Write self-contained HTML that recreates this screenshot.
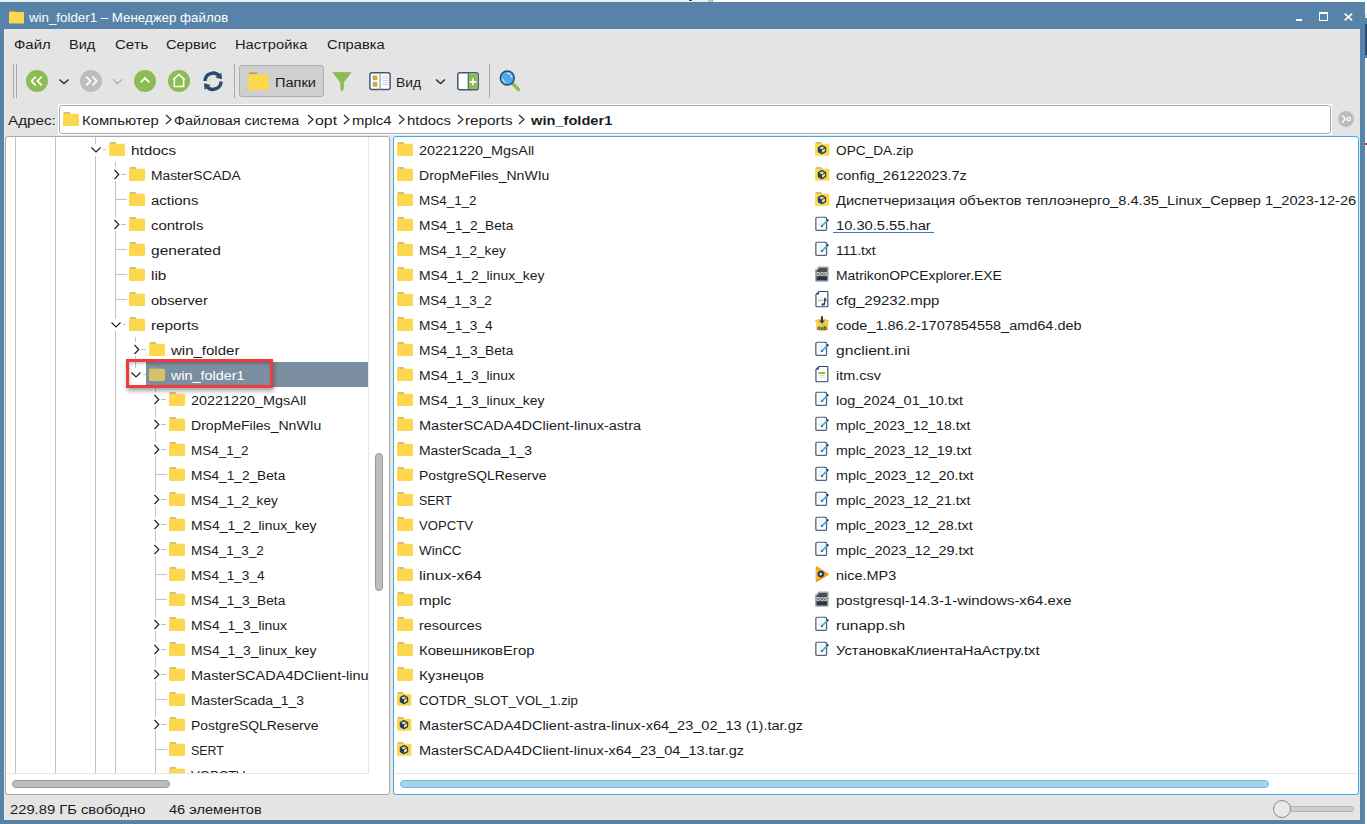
<!DOCTYPE html>
<html><head><meta charset="utf-8">
<style>
*{margin:0;padding:0;box-sizing:border-box}
html,body{width:1367px;height:824px;overflow:hidden;background:#fff}
body{position:relative;font-family:"Liberation Sans",sans-serif;font-size:14.4px;color:#1b1b1b}
.a{position:absolute}
.t{position:absolute;white-space:nowrap;line-height:25px;height:25px;font-size:12.5px;transform:scaleX(1.152);transform-origin:0 0}
.r{padding-top:2px}
.ic{position:absolute;overflow:visible}
</style></head><body>


<svg width="0" height="0" style="position:absolute">
<defs>
<symbol id="fold" viewBox="0 0 16 14">
  <path d="M0.5 1.2 Q0.5 0.2 1.5 0.2 H6 Q6.8 0.2 7.3 1.2 L7.6 1.8 H0.5 Z" fill="#c8a53c"/>
  <rect x="0" y="1.7" width="16" height="12.3" rx="1" fill="#fdd84e"/>
</symbol>
<symbol id="arch" viewBox="0 0 16 14" style="overflow:visible">
  <path d="M0.5 1.2 Q0.5 0.2 1.5 0.2 H5.6 Q6.4 0.2 6.9 1.2 L7.2 1.8 H0.5 Z" fill="#c8a53c"/>
  <rect x="0" y="1.7" width="14.4" height="12" rx="1" fill="#fdd84e"/>
  <path d="M7 3.6 L10.6 5.6 V9.6 L7 11.6 L3.4 9.6 V5.6 Z" fill="#fde35a" stroke="#1e3f6e" stroke-width="1.25" stroke-linejoin="round"/>
  <path d="M3.4 5.6 L7 7.6 V11.6 L3.4 9.6 Z" fill="#1e3f6e"/>
  <path d="M7 7.6 L10.6 5.6" stroke="#1e3f6e" stroke-width="1"/>
</symbol>
<symbol id="txt" viewBox="0 0 18 18" style="overflow:visible">
  <rect x="2.85" y="1.35" width="10.7" height="13.1" rx="1.2" fill="#fff" stroke="#4a6484" stroke-width="1.3"/>
  <path d="M4.5 1.3h1M7 1.3h1M9.5 1.3h1" stroke="#d0d8e0" stroke-width="0.8"/>
  <path d="M5.5 4h5M5.5 6h5M5.5 8h4M5.5 10h2.5" stroke="#e2e2e2" stroke-width="0.9"/>
  <path d="M8.6 10.4 L15.2 3.6" stroke="#3daee9" stroke-width="1.7"/>
  <path d="M8.4 10.6 L9.2 9.8" stroke="#222" stroke-width="1.6"/>
  <path d="M14 4.8 L15.3 3.5" stroke="#2a2a2a" stroke-width="1.7"/>
</symbol>
<symbol id="exe" viewBox="0 0 18 18" style="overflow:visible">
  <path d="M5.2 0.4 H14.6 Q15.6 0.4 15.6 1.4 V14.8 Q15.6 15.8 14.6 15.8 H3.1 Q2.1 15.8 2.1 14.8 V3.6 Z" fill="#a5a5a5"/>
  <path d="M5.6 1.9 H14.1 V14.2 H3.7 V4.1 Z" fill="#4b4d52"/>
  <path d="M2.1 3.6 L5.2 0.4 V3.6 Z" fill="#e8e8e8"/>
  <rect x="3.7" y="10.8" width="10.4" height="3.4" fill="#24354d"/>
  <text x="8.9" y="10.2" font-family="Liberation Sans" font-size="4.8" font-weight="700" fill="#eeeeee" text-anchor="middle">DOS</text>
</symbol>
<symbol id="doc" viewBox="0 0 18 18" style="overflow:visible">
  <path d="M6 0.55 H14.3 Q14.85 0.55 14.85 1.1 V15.2 Q14.85 15.75 14.3 15.75 H3.5 Q2.95 15.75 2.95 15.2 V3.6 Z" fill="#fff" stroke="#2f4a6b" stroke-width="1.1"/>
  <path d="M2.95 3.6 L6 0.55 V3.6 Z" fill="#2f4a6b"/>
  <path d="M5.3 9.6h1.2M7.3 9.6h1.2M9.3 9.6h1.2" stroke="#7cc142" stroke-width="1.3"/>
  <path d="M5.9 6.5v2.3M7.9 5v3.8M9.9 6.5v2.3" stroke="#d8d8d8" stroke-width="0.8"/>
  <path d="M11.6 7 V13.4 M11.6 7 Q13.3 8.2 13.1 10.2" stroke="#2f4a6b" stroke-width="1.2" fill="none"/>
  <ellipse cx="10.2" cy="13.4" rx="1.7" ry="1.2" fill="#2f4a6b"/>
</symbol>
<symbol id="csv" viewBox="0 0 18 18" style="overflow:visible">
  <path d="M6 0.55 H14.3 Q14.85 0.55 14.85 1.1 V15.2 Q14.85 15.75 14.3 15.75 H3.5 Q2.95 15.75 2.95 15.2 V3.6 Z" fill="#fff" stroke="#2f4a6b" stroke-width="1.1"/>
  <path d="M2.95 3.6 L6 0.55 V3.6 Z" fill="#2f4a6b"/>
  <rect x="5.6" y="5.9" width="6.6" height="2" fill="#7cc142"/>
  <path d="M5.6 9.5h6.6M5.6 11.3h6.6" stroke="#dcdcdc" stroke-width="1.1"/>
</symbol>
<symbol id="deb" viewBox="0 0 18 18" style="overflow:visible">
  <path d="M1.8 4.3 L9 2.2 L16.2 4.3 L15 6.6 L9 8.3 L3 6.6 Z" fill="#f4c63a"/>
  <path d="M3 6.6 L9 8.3 V15.6 L3.3 13.8 Z" fill="#f7d24c"/>
  <path d="M9 8.3 L15 6.6 L14.7 13.8 L9 15.6 Z" fill="#ecc030"/>
  <path d="M9 0.2 V5" stroke="#1f3d66" stroke-width="2"/>
  <path d="M6.2 4.5 L9 7.8 L11.8 4.5 Z" fill="#1f3d66"/>
  <text x="9" y="14" font-family="Liberation Sans" font-size="5.6" font-weight="700" fill="#1f3d66" text-anchor="middle">deb</text>
</symbol>
<symbol id="mp3" viewBox="0 0 18 18" style="overflow:visible">
  <path d="M3.4 0.9 L15.3 8.3 L3.4 15.5 Z" fill="#ff9b14" stroke="#ff9b14" stroke-width="1.4" stroke-linejoin="round"/>
  <path d="M3.6 3.2 L11 8.2 L3.6 13.2 Z" fill="#ffd43b"/>
  <circle cx="7.8" cy="8.1" r="3.4" fill="#1f3d66"/>
  <path d="M6.9 6.5 L9.6 8.1 L6.9 9.7 Z" fill="#fff"/>
</symbol>
</defs>
</svg>

<div class="a" style="left:0;top:0;width:708px;height:2px;background:#eeeff1"></div>
<div class="a" style="left:689px;top:0;width:3px;height:1px;background:#444"></div>
<div class="a" style="left:708px;top:0;width:4px;height:2px;background:#c8c4c0"></div>
<div class="a" style="left:712px;top:0;width:1px;height:2px;background:#8aa6c0"></div>
<div class="a" style="left:1365px;top:13px;width:2px;height:5px;background:#e6e6e6"></div>
<div class="a" style="left:1365px;top:18px;width:2px;height:6px;background:#5683a7"></div>
<div class="a" style="left:1365px;top:24px;width:2px;height:31px;background:#2f4a6b"></div>
<div class="a" style="left:1365px;top:55px;width:2px;height:3px;background:#5683a7"></div>
<div class="a" style="left:1365px;top:143px;width:2px;height:2px;background:#d9342b"></div>
<div class="a" style="left:0;top:2px;width:1365px;height:822px;background:#5683a7"></div>
<div class="a" style="left:4px;top:29px;width:1356px;height:791px;background:#e4e4e4"></div>
<div class="a" style="left:4px;top:29px;width:1px;height:791px;background:#ece8e6"></div>
<svg class="ic" style="left:9px;top:10px" width="15" height="14"><use href="#fold"/></svg>
<div class="t" style="left:29px;top:4.5px;color:#fff;font-size:13.2px;transform:scaleX(1.009)">win_folder1 – Менеджер файлов</div>
<div class="a" style="left:1296px;top:19px;width:6px;height:2px;background:#fff"></div>
<div class="a" style="left:1319px;top:12px;width:9px;height:9px;border:1.2px solid #fff;border-top-width:2px"></div>
<svg class="ic" style="left:1343.5px;top:12.6px" width="9" height="8"><path d="M0.7 0.6 L8.1 7.4 M8.1 0.6 L0.7 7.4" stroke="#fff" stroke-width="1.6"/></svg>
<div class="t" style="left:14px;top:33px;transform:scaleX(1.1967);">Файл</div>
<div class="t" style="left:69px;top:33px;transform:scaleX(1.1610);">Вид</div>
<div class="t" style="left:115px;top:33px;transform:scaleX(1.2011);">Сеть</div>
<div class="t" style="left:166px;top:33px;transform:scaleX(1.1757);">Сервис</div>
<div class="t" style="left:235px;top:33px;transform:scaleX(1.1749);">Настройка</div>
<div class="t" style="left:327px;top:33px;transform:scaleX(1.1790);">Справка</div>
<div class="a" style="left:13px;top:64px;width:1px;height:34px;background:#a8a8a8"></div>
<div class="a" style="left:16px;top:64px;width:1px;height:34px;background:#a8a8a8"></div>
<svg class="ic" style="left:0;top:55px" width="540" height="50">
<circle cx="37" cy="26" r="11" fill="#8bbd52"/>
<path d="M35.7 21.6 L31.5 26 L35.7 30.4 M41.8 21.6 L37.6 26 L41.8 30.4" stroke="#fff" stroke-width="1.8" fill="none"/>
<path d="M59.4 24.4 L64 28.6 L68.5 24.4" stroke="#2a2a2a" stroke-width="1.3" fill="none"/>
<circle cx="91" cy="26" r="11" fill="#bdbdbd"/>
<path d="M86.3 21.6 L90.5 26 L86.3 30.4 M92.4 21.6 L96.6 26 L92.4 30.4" stroke="#fff" stroke-width="1.8" fill="none"/>
<path d="M113 24.4 L117.5 28.6 L122 24.4" stroke="#a8a8a8" stroke-width="1.2" fill="none"/>
<circle cx="145" cy="26" r="11" fill="#8bbd52"/>
<path d="M140.6 27.4 L145 23 L149.4 27.4" stroke="#fff" stroke-width="1.8" fill="none"/>
<circle cx="179" cy="26" r="11" fill="#8bbd52"/>
<path d="M173.2 24.6 L179 19.5 L184.8 24.6 M174.3 24 V31.5 H183.6 V24" stroke="#fff" stroke-width="1.6" fill="none"/>
<path d="M205 26 A8 8 0 0 1 219.5 21.5" stroke="#2d4a6c" stroke-width="3.4" fill="none"/>
<path d="M221.3 17.5 L222 24.3 L215.5 22.5 Z" fill="#2d4a6c"/>
<path d="M221 26.5 A8 8 0 0 1 206.5 31" stroke="#2d4a6c" stroke-width="3.4" fill="none"/>
<path d="M204.6 35 L204 28.2 L210.5 30 Z" fill="#2d4a6c"/>
<rect x="234" y="9" width="1" height="34" fill="#aaa"/>
<path d="M333 17.5 H351 L343.4 27.5 V34 Q343 35.5 341 35.8 L340.6 27.5 Z" fill="#8bbd52" stroke="#8bbd52" stroke-width="0.8" stroke-linejoin="round"/>
<rect x="369.9" y="17.8" width="20.2" height="16.8" rx="2" fill="#fff" stroke="#3d5a7a" stroke-width="1.5"/>
<rect x="379.5" y="18" width="1.2" height="16.5" fill="#8d9fb3"/>
<rect x="372.7" y="20.5" width="4.6" height="4.7" rx="0.8" fill="#c9a83e"/>
<rect x="372.7" y="27" width="4.6" height="4.7" rx="0.8" fill="#c9a83e"/>
<path d="M382.5 21.5h6M382.5 23.5h6M382.5 25.5h6M382.5 27.5h6M382.5 29.5h6" stroke="#cfcfcf" stroke-width="0.9"/>
<path d="M436 24.4 L440.5 28.6 L445 24.4" stroke="#2a2a2a" stroke-width="1.3" fill="none"/>
<rect x="457.8" y="17.8" width="20.4" height="16.9" rx="2" fill="#fff" stroke="#3d5a7a" stroke-width="1.5"/>
<rect x="468.3" y="18.6" width="9.2" height="15.3" fill="#8bbd52"/>
<rect x="467.7" y="18" width="1.1" height="16.5" fill="#3d5a7a"/>
<path d="M473 23.3 V30.3 M469.5 26.8 H476.5" stroke="#fff" stroke-width="1.7"/>
<rect x="489" y="9" width="1" height="34" fill="#aaa"/>
<path d="M512 28 L519.5 35.5" stroke="#8bbd52" stroke-width="3.3"/>
<circle cx="507.3" cy="23" r="7" fill="#49adec" stroke="#2d4a6c" stroke-width="1.4"/>
<path d="M507 18.3 A4.7 4.7 0 0 1 511.8 22.6 M502.6 23.5 A4.7 4.7 0 0 0 505.5 27.5" stroke="#fff" stroke-width="1" fill="none"/>
</svg>
<div class="a" style="left:239px;top:65px;width:85px;height:32px;background:#cfcfcf;border:1px solid #aeaeae;border-radius:3px"></div>
<svg class="ic" style="left:248px;top:72px" width="21" height="18"><use href="#fold"/></svg>
<div class="t" style="left:274.5px;top:71px;transform:scaleX(1.1664);">Папки</div>
<div class="t" style="left:395.5px;top:71px;transform:scaleX(1.1076);">Вид</div>
<div class="t" style="left:8px;top:109px;transform:scaleX(1.2156);">Адрес:</div>
<div class="a" style="left:58px;top:104px;width:1274px;height:31px;background:#fff"></div>
<div class="a" style="left:59px;top:105px;width:1272px;height:29px;border:1px solid #acacac;border-radius:3px"></div>
<svg class="ic" style="left:63px;top:112px" width="16" height="14"><use href="#fold"/></svg>
<div class="t" style="left:81.5px;top:109px;transform:scaleX(1.1878);">Компьютер</div>
<div class="t" style="left:173.5px;top:109px;transform:scaleX(1.1474);">Файловая система</div>
<div class="t" style="left:315px;top:109px;transform:scaleX(1.2702);">opt</div>
<div class="t" style="left:351.5px;top:109px;transform:scaleX(1.1823);">mplc4</div>
<div class="t" style="left:406.5px;top:109px;transform:scaleX(1.1904);">htdocs</div>
<div class="t" style="left:465px;top:109px;transform:scaleX(1.2235);">reports</div>
<svg class="ic" style="left:164.5px;top:114px" width="8" height="12"><path d="M1 1 L6 5.5 L1 10" stroke="#222" stroke-width="1.1" fill="none"/></svg>
<svg class="ic" style="left:306.5px;top:114px" width="8" height="12"><path d="M1 1 L6 5.5 L1 10" stroke="#222" stroke-width="1.1" fill="none"/></svg>
<svg class="ic" style="left:343px;top:114px" width="8" height="12"><path d="M1 1 L6 5.5 L1 10" stroke="#222" stroke-width="1.1" fill="none"/></svg>
<svg class="ic" style="left:397.5px;top:114px" width="8" height="12"><path d="M1 1 L6 5.5 L1 10" stroke="#222" stroke-width="1.1" fill="none"/></svg>
<svg class="ic" style="left:457px;top:114px" width="8" height="12"><path d="M1 1 L6 5.5 L1 10" stroke="#222" stroke-width="1.1" fill="none"/></svg>
<svg class="ic" style="left:518px;top:114px" width="8" height="12"><path d="M1 1 L6 5.5 L1 10" stroke="#222" stroke-width="1.1" fill="none"/></svg>
<div class="t" style="left:530.5px;top:109px;transform:scaleX(1.1707);font-weight:700;">win_folder1</div>
<svg class="ic" style="left:1338px;top:111px" width="16" height="16"><circle cx="8" cy="8" r="8" fill="#bcbcbc"/><path d="M4 4.5 L7.5 8 L4 11.5" stroke="#fff" stroke-width="1.4" fill="none"/><circle cx="10.8" cy="8" r="1.6" stroke="#fff" stroke-width="1.2" fill="none"/></svg>
<div class="a" style="left:5px;top:136px;width:385px;height:659px;background:#fff;border:1px solid #a9a9a9;border-radius:3px"></div>
<div class="a" style="left:6px;top:137px;width:362px;height:636px;overflow:hidden">
<div class="a" style="left:9px;top:0px;width:1px;height:636px;background:#c2c2c2"></div>
<div class="a" style="left:49px;top:0px;width:1px;height:636px;background:#c2c2c2"></div>
<div class="a" style="left:140px;top:225px;width:222px;height:25px;background:#7b8fa1"></div>
<div class="a" style="left:89px;top:0px;width:1px;height:636px;background:#c2c2c2"></div>
<div class="a" style="left:109px;top:25px;width:1px;height:611px;background:#c2c2c2"></div>
<div class="a" style="left:129px;top:200px;width:1px;height:31px;background:#c2c2c2"></div>
<div class="a" style="left:149px;top:251px;width:1px;height:385px;background:#c2c2c2"></div>
<div class="a" style="left:95px;top:12px;width:5px;height:1px;background:#c2c2c2"></div>
<div class="a" style="left:84px;top:7px;width:13px;height:12px;background:#fff"></div>
<svg class="ic" style="left:85px;top:10px" width="12" height="8"><path d="M0.5 0.5 L5 5 L9.5 0.5" stroke="#1e1e1e" stroke-width="1.15" fill="none"/></svg>
<svg class="ic" style="left:103px;top:5px;" width="16" height="14"><use href="#fold"/></svg>
<div class="t r" style="left:125px;top:0px;transform:scaleX(1.2242)">htdocs</div>
<div class="a" style="left:115px;top:37px;width:5px;height:1px;background:#c2c2c2"></div>
<div class="a" style="left:106px;top:30px;width:9px;height:14px;background:#fff"></div>
<svg class="ic" style="left:108px;top:32px" width="8" height="12"><path d="M0.5 1 L4.8 5.5 L0.5 10" stroke="#1e1e1e" stroke-width="1.15" fill="none"/></svg>
<svg class="ic" style="left:123px;top:30px;" width="16" height="14"><use href="#fold"/></svg>
<div class="t r" style="left:145px;top:25px;transform:scaleX(1.1047)">MasterSCADA</div>
<div class="a" style="left:109px;top:62px;width:12px;height:1px;background:#c2c2c2"></div>
<svg class="ic" style="left:123px;top:55px;" width="16" height="14"><use href="#fold"/></svg>
<div class="t r" style="left:145px;top:50px;transform:scaleX(1.1960)">actions</div>
<div class="a" style="left:115px;top:87px;width:5px;height:1px;background:#c2c2c2"></div>
<div class="a" style="left:106px;top:80px;width:9px;height:14px;background:#fff"></div>
<svg class="ic" style="left:108px;top:82px" width="8" height="12"><path d="M0.5 1 L4.8 5.5 L0.5 10" stroke="#1e1e1e" stroke-width="1.15" fill="none"/></svg>
<svg class="ic" style="left:123px;top:80px;" width="16" height="14"><use href="#fold"/></svg>
<div class="t r" style="left:145px;top:75px;transform:scaleX(1.1962)">controls</div>
<div class="a" style="left:109px;top:112px;width:12px;height:1px;background:#c2c2c2"></div>
<svg class="ic" style="left:123px;top:105px;" width="16" height="14"><use href="#fold"/></svg>
<div class="t r" style="left:145px;top:100px;transform:scaleX(1.2409)">generated</div>
<div class="a" style="left:109px;top:137px;width:12px;height:1px;background:#c2c2c2"></div>
<svg class="ic" style="left:123px;top:130px;" width="16" height="14"><use href="#fold"/></svg>
<div class="t r" style="left:145px;top:125px;transform:scaleX(1.2288)">lib</div>
<div class="a" style="left:109px;top:162px;width:12px;height:1px;background:#c2c2c2"></div>
<svg class="ic" style="left:123px;top:155px;" width="16" height="14"><use href="#fold"/></svg>
<div class="t r" style="left:145px;top:150px;transform:scaleX(1.1686)">observer</div>
<div class="a" style="left:115px;top:187px;width:5px;height:1px;background:#c2c2c2"></div>
<div class="a" style="left:104px;top:182px;width:13px;height:12px;background:#fff"></div>
<svg class="ic" style="left:105px;top:185px" width="12" height="8"><path d="M0.5 0.5 L5 5 L9.5 0.5" stroke="#1e1e1e" stroke-width="1.15" fill="none"/></svg>
<svg class="ic" style="left:123px;top:180px;" width="16" height="14"><use href="#fold"/></svg>
<div class="t r" style="left:145px;top:175px;transform:scaleX(1.2235)">reports</div>
<div class="a" style="left:135px;top:212px;width:5px;height:1px;background:#c2c2c2"></div>
<div class="a" style="left:126px;top:205px;width:9px;height:14px;background:#fff"></div>
<svg class="ic" style="left:128px;top:207px" width="8" height="12"><path d="M0.5 1 L4.8 5.5 L0.5 10" stroke="#1e1e1e" stroke-width="1.15" fill="none"/></svg>
<svg class="ic" style="left:143px;top:205px;" width="16" height="14"><use href="#fold"/></svg>
<div class="t r" style="left:165px;top:200px;transform:scaleX(1.2003)">win_folder</div>
<div class="a" style="left:135px;top:237px;width:5px;height:1px;background:#c2c2c2"></div>
<div class="a" style="left:124px;top:232px;width:13px;height:12px;background:#fff"></div>
<svg class="ic" style="left:125px;top:235px" width="12" height="8"><path d="M0.5 0.5 L5 5 L9.5 0.5" stroke="#1e1e1e" stroke-width="1.15" fill="none"/></svg>
<svg class="ic" style="left:143px;top:230px;opacity:0.7" width="16" height="14"><use href="#fold"/></svg>
<div class="t r" style="left:165px;top:225px;color:#fff;transform:scaleX(1.1504)">win_folder1</div>
<div class="a" style="left:155px;top:262px;width:5px;height:1px;background:#c2c2c2"></div>
<div class="a" style="left:146px;top:255px;width:9px;height:14px;background:#fff"></div>
<svg class="ic" style="left:148px;top:257px" width="8" height="12"><path d="M0.5 1 L4.8 5.5 L0.5 10" stroke="#1e1e1e" stroke-width="1.15" fill="none"/></svg>
<svg class="ic" style="left:163px;top:255px;" width="16" height="14"><use href="#fold"/></svg>
<div class="t r" style="left:185px;top:250px;transform:scaleX(1.1520)">20221220_MgsAll</div>
<div class="a" style="left:155px;top:287px;width:5px;height:1px;background:#c2c2c2"></div>
<div class="a" style="left:146px;top:280px;width:9px;height:14px;background:#fff"></div>
<svg class="ic" style="left:148px;top:282px" width="8" height="12"><path d="M0.5 1 L4.8 5.5 L0.5 10" stroke="#1e1e1e" stroke-width="1.15" fill="none"/></svg>
<svg class="ic" style="left:163px;top:280px;" width="16" height="14"><use href="#fold"/></svg>
<div class="t r" style="left:185px;top:275px;transform:scaleX(1.1241)">DropMeFiles_NnWIu</div>
<div class="a" style="left:155px;top:312px;width:5px;height:1px;background:#c2c2c2"></div>
<div class="a" style="left:146px;top:305px;width:9px;height:14px;background:#fff"></div>
<svg class="ic" style="left:148px;top:307px" width="8" height="12"><path d="M0.5 1 L4.8 5.5 L0.5 10" stroke="#1e1e1e" stroke-width="1.15" fill="none"/></svg>
<svg class="ic" style="left:163px;top:305px;" width="16" height="14"><use href="#fold"/></svg>
<div class="t r" style="left:185px;top:300px;transform:scaleX(1.0759)">MS4_1_2</div>
<div class="a" style="left:149px;top:337px;width:12px;height:1px;background:#c2c2c2"></div>
<svg class="ic" style="left:163px;top:330px;" width="16" height="14"><use href="#fold"/></svg>
<div class="t r" style="left:185px;top:325px;transform:scaleX(1.0935)">MS4_1_2_Beta</div>
<div class="a" style="left:155px;top:362px;width:5px;height:1px;background:#c2c2c2"></div>
<div class="a" style="left:146px;top:355px;width:9px;height:14px;background:#fff"></div>
<svg class="ic" style="left:148px;top:357px" width="8" height="12"><path d="M0.5 1 L4.8 5.5 L0.5 10" stroke="#1e1e1e" stroke-width="1.15" fill="none"/></svg>
<svg class="ic" style="left:163px;top:355px;" width="16" height="14"><use href="#fold"/></svg>
<div class="t r" style="left:185px;top:350px;transform:scaleX(1.0853)">MS4_1_2_key</div>
<div class="a" style="left:155px;top:387px;width:5px;height:1px;background:#c2c2c2"></div>
<div class="a" style="left:146px;top:380px;width:9px;height:14px;background:#fff"></div>
<svg class="ic" style="left:148px;top:382px" width="8" height="12"><path d="M0.5 1 L4.8 5.5 L0.5 10" stroke="#1e1e1e" stroke-width="1.15" fill="none"/></svg>
<svg class="ic" style="left:163px;top:380px;" width="16" height="14"><use href="#fold"/></svg>
<div class="t r" style="left:185px;top:375px;transform:scaleX(1.1153)">MS4_1_2_linux_key</div>
<div class="a" style="left:155px;top:412px;width:5px;height:1px;background:#c2c2c2"></div>
<div class="a" style="left:146px;top:405px;width:9px;height:14px;background:#fff"></div>
<svg class="ic" style="left:148px;top:407px" width="8" height="12"><path d="M0.5 1 L4.8 5.5 L0.5 10" stroke="#1e1e1e" stroke-width="1.15" fill="none"/></svg>
<svg class="ic" style="left:163px;top:405px;" width="16" height="14"><use href="#fold"/></svg>
<div class="t r" style="left:185px;top:400px;transform:scaleX(1.0782)">MS4_1_3_2</div>
<div class="a" style="left:149px;top:437px;width:12px;height:1px;background:#c2c2c2"></div>
<svg class="ic" style="left:163px;top:430px;" width="16" height="14"><use href="#fold"/></svg>
<div class="t r" style="left:185px;top:425px;transform:scaleX(1.0918)">MS4_1_3_4</div>
<div class="a" style="left:149px;top:462px;width:12px;height:1px;background:#c2c2c2"></div>
<svg class="ic" style="left:163px;top:455px;" width="16" height="14"><use href="#fold"/></svg>
<div class="t r" style="left:185px;top:450px;transform:scaleX(1.0935)">MS4_1_3_Beta</div>
<div class="a" style="left:155px;top:487px;width:5px;height:1px;background:#c2c2c2"></div>
<div class="a" style="left:146px;top:480px;width:9px;height:14px;background:#fff"></div>
<svg class="ic" style="left:148px;top:482px" width="8" height="12"><path d="M0.5 1 L4.8 5.5 L0.5 10" stroke="#1e1e1e" stroke-width="1.15" fill="none"/></svg>
<svg class="ic" style="left:163px;top:480px;" width="16" height="14"><use href="#fold"/></svg>
<div class="t r" style="left:185px;top:475px;transform:scaleX(1.1146)">MS4_1_3_linux</div>
<div class="a" style="left:155px;top:512px;width:5px;height:1px;background:#c2c2c2"></div>
<div class="a" style="left:146px;top:505px;width:9px;height:14px;background:#fff"></div>
<svg class="ic" style="left:148px;top:507px" width="8" height="12"><path d="M0.5 1 L4.8 5.5 L0.5 10" stroke="#1e1e1e" stroke-width="1.15" fill="none"/></svg>
<svg class="ic" style="left:163px;top:505px;" width="16" height="14"><use href="#fold"/></svg>
<div class="t r" style="left:185px;top:500px;transform:scaleX(1.1153)">MS4_1_3_linux_key</div>
<div class="a" style="left:155px;top:537px;width:5px;height:1px;background:#c2c2c2"></div>
<div class="a" style="left:146px;top:530px;width:9px;height:14px;background:#fff"></div>
<svg class="ic" style="left:148px;top:532px" width="8" height="12"><path d="M0.5 1 L4.8 5.5 L0.5 10" stroke="#1e1e1e" stroke-width="1.15" fill="none"/></svg>
<svg class="ic" style="left:163px;top:530px;" width="16" height="14"><use href="#fold"/></svg>
<div class="t r" style="left:185px;top:525px;transform:scaleX(1.1625)">MasterSCADA4DClient-linux-astra</div>
<div class="a" style="left:149px;top:562px;width:12px;height:1px;background:#c2c2c2"></div>
<svg class="ic" style="left:163px;top:555px;" width="16" height="14"><use href="#fold"/></svg>
<div class="t r" style="left:185px;top:550px;transform:scaleX(1.1141)">MasterScada_1_3</div>
<div class="a" style="left:155px;top:587px;width:5px;height:1px;background:#c2c2c2"></div>
<div class="a" style="left:146px;top:580px;width:9px;height:14px;background:#fff"></div>
<svg class="ic" style="left:148px;top:582px" width="8" height="12"><path d="M0.5 1 L4.8 5.5 L0.5 10" stroke="#1e1e1e" stroke-width="1.15" fill="none"/></svg>
<svg class="ic" style="left:163px;top:580px;" width="16" height="14"><use href="#fold"/></svg>
<div class="t r" style="left:185px;top:575px;transform:scaleX(1.1114)">PostgreSQLReserve</div>
<div class="a" style="left:149px;top:612px;width:12px;height:1px;background:#c2c2c2"></div>
<svg class="ic" style="left:163px;top:605px;" width="16" height="14"><use href="#fold"/></svg>
<div class="t r" style="left:185px;top:600px;transform:scaleX(0.9953)">SERT</div>
<div class="a" style="left:149px;top:637px;width:12px;height:1px;background:#c2c2c2"></div>
<svg class="ic" style="left:163px;top:630px;" width="16" height="14"><use href="#fold"/></svg>
<div class="t r" style="left:185px;top:625px;transform:scaleX(1.0515)">VOPCTV</div>
</div>
<div class="a" style="left:368px;top:137px;width:1px;height:636px;background:#e6e6e6"></div>
<div class="a" style="left:6px;top:773px;width:363px;height:1px;background:#e6e6e6"></div>
<div class="a" style="left:375px;top:453px;width:8px;height:138px;background:#bdbdbd;border:1px solid #999;border-radius:4px"></div>
<div class="a" style="left:12px;top:780px;width:158px;height:8px;background:#bdbdbd;border:1px solid #999;border-radius:4px"></div>
<div class="a" style="left:393px;top:136px;width:966px;height:659px;background:#fff;border:1px solid #3daee9;border-radius:3px"></div>
<div class="a" style="left:394px;top:137px;width:964px;height:636px;overflow:hidden">
<svg class="ic" style="left:3px;top:5px" width="16" height="14"><use href="#fold"/></svg>
<div class="t r" style="left:25px;top:0px;transform:scaleX(1.1520)">20221220_MgsAll</div>
<svg class="ic" style="left:3px;top:30px" width="16" height="14"><use href="#fold"/></svg>
<div class="t r" style="left:25px;top:25px;transform:scaleX(1.1241)">DropMeFiles_NnWIu</div>
<svg class="ic" style="left:3px;top:55px" width="16" height="14"><use href="#fold"/></svg>
<div class="t r" style="left:25px;top:50px;transform:scaleX(1.0759)">MS4_1_2</div>
<svg class="ic" style="left:3px;top:80px" width="16" height="14"><use href="#fold"/></svg>
<div class="t r" style="left:25px;top:75px;transform:scaleX(1.0935)">MS4_1_2_Beta</div>
<svg class="ic" style="left:3px;top:105px" width="16" height="14"><use href="#fold"/></svg>
<div class="t r" style="left:25px;top:100px;transform:scaleX(1.0853)">MS4_1_2_key</div>
<svg class="ic" style="left:3px;top:130px" width="16" height="14"><use href="#fold"/></svg>
<div class="t r" style="left:25px;top:125px;transform:scaleX(1.1153)">MS4_1_2_linux_key</div>
<svg class="ic" style="left:3px;top:155px" width="16" height="14"><use href="#fold"/></svg>
<div class="t r" style="left:25px;top:150px;transform:scaleX(1.0782)">MS4_1_3_2</div>
<svg class="ic" style="left:3px;top:180px" width="16" height="14"><use href="#fold"/></svg>
<div class="t r" style="left:25px;top:175px;transform:scaleX(1.0918)">MS4_1_3_4</div>
<svg class="ic" style="left:3px;top:205px" width="16" height="14"><use href="#fold"/></svg>
<div class="t r" style="left:25px;top:200px;transform:scaleX(1.0935)">MS4_1_3_Beta</div>
<svg class="ic" style="left:3px;top:230px" width="16" height="14"><use href="#fold"/></svg>
<div class="t r" style="left:25px;top:225px;transform:scaleX(1.1146)">MS4_1_3_linux</div>
<svg class="ic" style="left:3px;top:255px" width="16" height="14"><use href="#fold"/></svg>
<div class="t r" style="left:25px;top:250px;transform:scaleX(1.1153)">MS4_1_3_linux_key</div>
<svg class="ic" style="left:3px;top:280px" width="16" height="14"><use href="#fold"/></svg>
<div class="t r" style="left:25px;top:275px;transform:scaleX(1.1625)">MasterSCADA4DClient-linux-astra</div>
<svg class="ic" style="left:3px;top:305px" width="16" height="14"><use href="#fold"/></svg>
<div class="t r" style="left:25px;top:300px;transform:scaleX(1.1141)">MasterScada_1_3</div>
<svg class="ic" style="left:3px;top:330px" width="16" height="14"><use href="#fold"/></svg>
<div class="t r" style="left:25px;top:325px;transform:scaleX(1.1114)">PostgreSQLReserve</div>
<svg class="ic" style="left:3px;top:355px" width="16" height="14"><use href="#fold"/></svg>
<div class="t r" style="left:25px;top:350px;transform:scaleX(0.9953)">SERT</div>
<svg class="ic" style="left:3px;top:380px" width="16" height="14"><use href="#fold"/></svg>
<div class="t r" style="left:25px;top:375px;transform:scaleX(1.0515)">VOPCTV</div>
<svg class="ic" style="left:3px;top:405px" width="16" height="14"><use href="#fold"/></svg>
<div class="t r" style="left:25px;top:400px;transform:scaleX(1.0744)">WinCC</div>
<svg class="ic" style="left:3px;top:430px" width="16" height="14"><use href="#fold"/></svg>
<div class="t r" style="left:25px;top:425px;transform:scaleX(1.2540)">linux-x64</div>
<svg class="ic" style="left:3px;top:455px" width="16" height="14"><use href="#fold"/></svg>
<div class="t r" style="left:25px;top:450px;transform:scaleX(1.2223)">mplc</div>
<svg class="ic" style="left:3px;top:480px" width="16" height="14"><use href="#fold"/></svg>
<div class="t r" style="left:25px;top:475px;transform:scaleX(1.1465)">resources</div>
<svg class="ic" style="left:3px;top:505px" width="16" height="14"><use href="#fold"/></svg>
<div class="t r" style="left:25px;top:500px;transform:scaleX(1.1854)">КовешниковЕгор</div>
<svg class="ic" style="left:3px;top:530px" width="16" height="14"><use href="#fold"/></svg>
<div class="t r" style="left:25px;top:525px;transform:scaleX(1.2091)">Кузнецов</div>
<svg class="ic" style="left:3px;top:555px" width="16" height="14"><use href="#arch"/></svg>
<div class="t r" style="left:25px;top:550px;transform:scaleX(1.0642)">COTDR_SLOT_VOL_1.zip</div>
<svg class="ic" style="left:3px;top:580px" width="16" height="14"><use href="#arch"/></svg>
<div class="t r" style="left:25px;top:575px;transform:scaleX(1.1611)">MasterSCADA4DClient-astra-linux-x64_23_02_13 (1).tar.gz</div>
<svg class="ic" style="left:3px;top:605px" width="16" height="14"><use href="#arch"/></svg>
<div class="t r" style="left:25px;top:600px;transform:scaleX(1.1610)">MasterSCADA4DClient-linux-x64_23_04_13.tar.gz</div>
<svg class="ic" style="left:421px;top:5px" width="16" height="14"><use href="#arch"/></svg>
<div class="t r" style="left:442px;top:0px;transform:scaleX(1.0934);">OPC_DA.zip</div>
<svg class="ic" style="left:421px;top:30px" width="16" height="14"><use href="#arch"/></svg>
<div class="t r" style="left:442px;top:25px;transform:scaleX(1.1619);">config_26122023.7z</div>
<svg class="ic" style="left:421px;top:55px" width="16" height="14"><use href="#arch"/></svg>
<div class="t r" style="left:442px;top:50px;transform:scaleX(1.1712);">Диспетчеризация объектов теплоэнерго_8.4.35_Linux_Сервер 1_2023-12-26</div>
<svg class="ic" style="left:419px;top:79px" width="18" height="18"><use href="#txt"/></svg>
<div class="t r" style="left:442px;top:75px;transform:scaleX(1.1745);">10.30.5.55.har</div>
<svg class="ic" style="left:419px;top:104px" width="18" height="18"><use href="#txt"/></svg>
<div class="t r" style="left:442px;top:100px;transform:scaleX(1.1121);">111.txt</div>
<svg class="ic" style="left:419px;top:129px" width="18" height="18"><use href="#exe"/></svg>
<div class="t r" style="left:442px;top:125px;transform:scaleX(1.1103);">MatrikonOPCExplorer.EXE</div>
<svg class="ic" style="left:419px;top:154px" width="18" height="18"><use href="#doc"/></svg>
<div class="t r" style="left:442px;top:150px;transform:scaleX(1.1988);">cfg_29232.mpp</div>
<svg class="ic" style="left:419px;top:179px" width="18" height="18"><use href="#deb"/></svg>
<div class="t r" style="left:442px;top:175px;transform:scaleX(1.1586);">code_1.86.2-1707854558_amd64.deb</div>
<svg class="ic" style="left:419px;top:204px" width="18" height="18"><use href="#txt"/></svg>
<div class="t r" style="left:442px;top:200px;transform:scaleX(1.2507);">gnclient.ini</div>
<svg class="ic" style="left:419px;top:229px" width="18" height="18"><use href="#csv"/></svg>
<div class="t r" style="left:442px;top:225px;transform:scaleX(1.1546);">itm.csv</div>
<svg class="ic" style="left:419px;top:254px" width="18" height="18"><use href="#txt"/></svg>
<div class="t r" style="left:442px;top:250px;transform:scaleX(1.1575);">log_2024_01_10.txt</div>
<svg class="ic" style="left:419px;top:279px" width="18" height="18"><use href="#txt"/></svg>
<div class="t r" style="left:442px;top:275px;transform:scaleX(1.1252);">mplc_2023_12_18.txt</div>
<svg class="ic" style="left:419px;top:304px" width="18" height="18"><use href="#txt"/></svg>
<div class="t r" style="left:442px;top:300px;transform:scaleX(1.1328);">mplc_2023_12_19.txt</div>
<svg class="ic" style="left:419px;top:329px" width="18" height="18"><use href="#txt"/></svg>
<div class="t r" style="left:442px;top:325px;transform:scaleX(1.1512);">mplc_2023_12_20.txt</div>
<svg class="ic" style="left:419px;top:354px" width="18" height="18"><use href="#txt"/></svg>
<div class="t r" style="left:442px;top:350px;transform:scaleX(1.1252);">mplc_2023_12_21.txt</div>
<svg class="ic" style="left:419px;top:379px" width="18" height="18"><use href="#txt"/></svg>
<div class="t r" style="left:442px;top:375px;transform:scaleX(1.1436);">mplc_2023_12_28.txt</div>
<svg class="ic" style="left:419px;top:404px" width="18" height="18"><use href="#txt"/></svg>
<div class="t r" style="left:442px;top:400px;transform:scaleX(1.1512);">mplc_2023_12_29.txt</div>
<svg class="ic" style="left:419px;top:429px" width="18" height="18"><use href="#mp3"/></svg>
<div class="t r" style="left:442px;top:425px;transform:scaleX(1.1559);">nice.MP3</div>
<svg class="ic" style="left:419px;top:454px" width="18" height="18"><use href="#exe"/></svg>
<div class="t r" style="left:442px;top:450px;transform:scaleX(1.1942);">postgresql-14.3-1-windows-x64.exe</div>
<svg class="ic" style="left:419px;top:479px" width="18" height="18"><use href="#txt"/></svg>
<div class="t r" style="left:442px;top:475px;transform:scaleX(1.2423);">runapp.sh</div>
<svg class="ic" style="left:419px;top:504px" width="18" height="18"><use href="#txt"/></svg>
<div class="t r" style="left:442px;top:500px;transform:scaleX(1.1853);">УстановкаКлиентаНаАстру.txt</div>
<div class="a" style="left:439px;top:95px;width:101px;height:1px;background:#4a76a0"></div>
</div>
<div class="a" style="left:394px;top:773px;width:964px;height:1px;background:#e6e6e6"></div>
<div class="a" style="left:400px;top:780px;width:869px;height:8px;background:#a9d3e8;border:1px solid #6cbde9;border-radius:4px"></div>
<div class="t" style="left:10px;top:798px;transform:scaleX(1.1792);">229.89 ГБ свободно</div>
<div class="t" style="left:169px;top:798px;transform:scaleX(1.1686);">46 элементов</div>
<div class="a" style="left:1288px;top:806px;width:66px;height:6px;background:#cdcdcd;border:1px solid #b5b5b5;border-radius:3px"></div>
<div class="a" style="left:1273px;top:800px;width:18px;height:18px;background:#e9e9e9;border:1px solid #8a8a8a;border-radius:50%"></div>
<div class="a" style="left:126px;top:359px;width:147px;height:29px;border:3px solid #ef3b3b;box-shadow:1px 3px 4px rgba(0,0,0,0.35), inset 1px 2px 3px rgba(0,0,0,0.22)"></div>
</body></html>
